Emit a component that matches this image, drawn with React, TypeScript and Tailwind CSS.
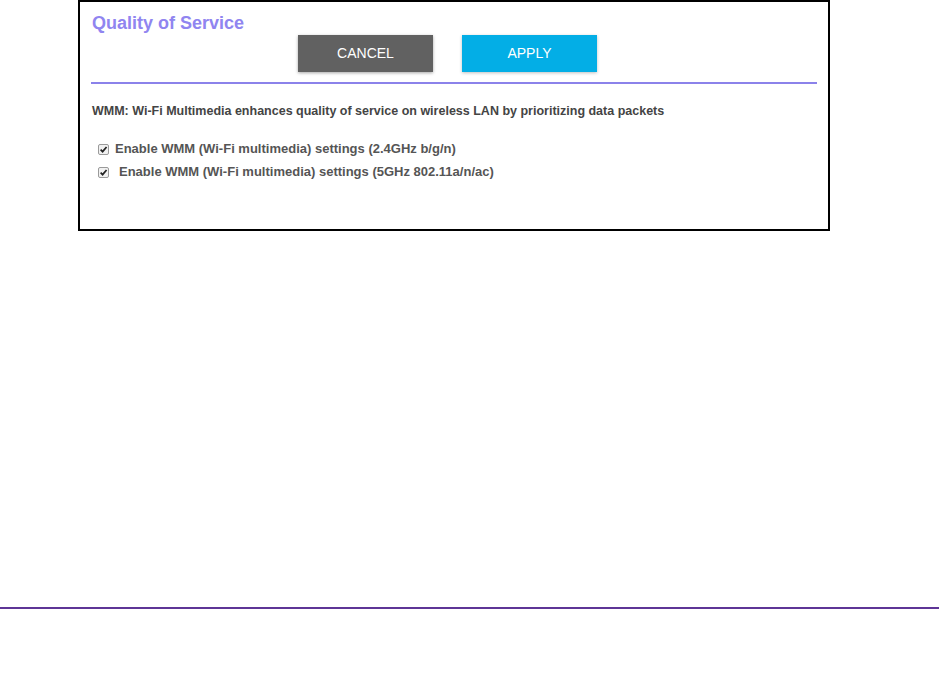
import React from 'react';

const font = { fontFamily: '"Liberation Sans", Arial, sans-serif' };

const CheckRow: React.FC<{ label: string; gap: string }> = ({ label, gap }) => (
  <label className={`flex items-center ${gap} text-[13px] text-[#555555] font-semibold leading-[16px]`}>
    <span className="flex h-[11px] w-[11px] items-center justify-center rounded-[2px] border border-[#9a9a9a] bg-[#f1f1f1]">
      <svg viewBox="0 0 10 10" className="h-[9px] w-[9px]">
        <path d="M1.8 5.2 L4 7.4 L8.4 2.2" fill="none" stroke="#222" strokeWidth="1.9" />
      </svg>
    </span>
    <span>{label}</span>
  </label>
);

const App: React.FC = () => {
  return (
    <div className="min-h-[675px] w-[941px] bg-white" style={font}>
      <div className="ml-[78px] h-[231px] w-[752px] border-2 border-black bg-white">
        <h1 className="pl-[12px] pt-[10px] text-[18px] font-bold leading-[22px] text-[#9085f0]">Quality of Service</h1>
        <div className="mt-px flex gap-[29px] pl-[218px]">
          <button className="h-[37px] w-[135px] bg-[#616161] text-[14px] text-white shadow-[0_1px_3px_rgba(0,0,0,0.35)]">CANCEL</button>
          <button className="h-[37px] w-[135px] bg-[#03aee6] text-[14px] text-white shadow-[0_1px_3px_rgba(0,0,0,0.25)]">APPLY</button>
        </div>
        <div className="mx-[11px] mt-[10px] h-[2px] bg-[#8b82ea]" />
        <p className="pl-[12px] pt-[19px] text-[12.5px] font-bold leading-[16px] text-[#444444]">
          WMM: Wi-Fi Multimedia enhances quality of service on wireless LAN by prioritizing data packets
        </p>
        <div className="mt-[22px] flex flex-col gap-[7px] pl-[18px]">
          <CheckRow label="Enable WMM (Wi-Fi multimedia) settings (2.4GHz b/g/n)" gap="gap-[6px]" />
          <CheckRow label="Enable WMM (Wi-Fi multimedia) settings (5GHz 802.11a/n/ac)" gap="gap-[10px]" />
        </div>
      </div>
      <div className="mt-[376px] h-[1.5px] w-[939px] bg-[#5e3596]" />
    </div>
  );
};

export default App;
